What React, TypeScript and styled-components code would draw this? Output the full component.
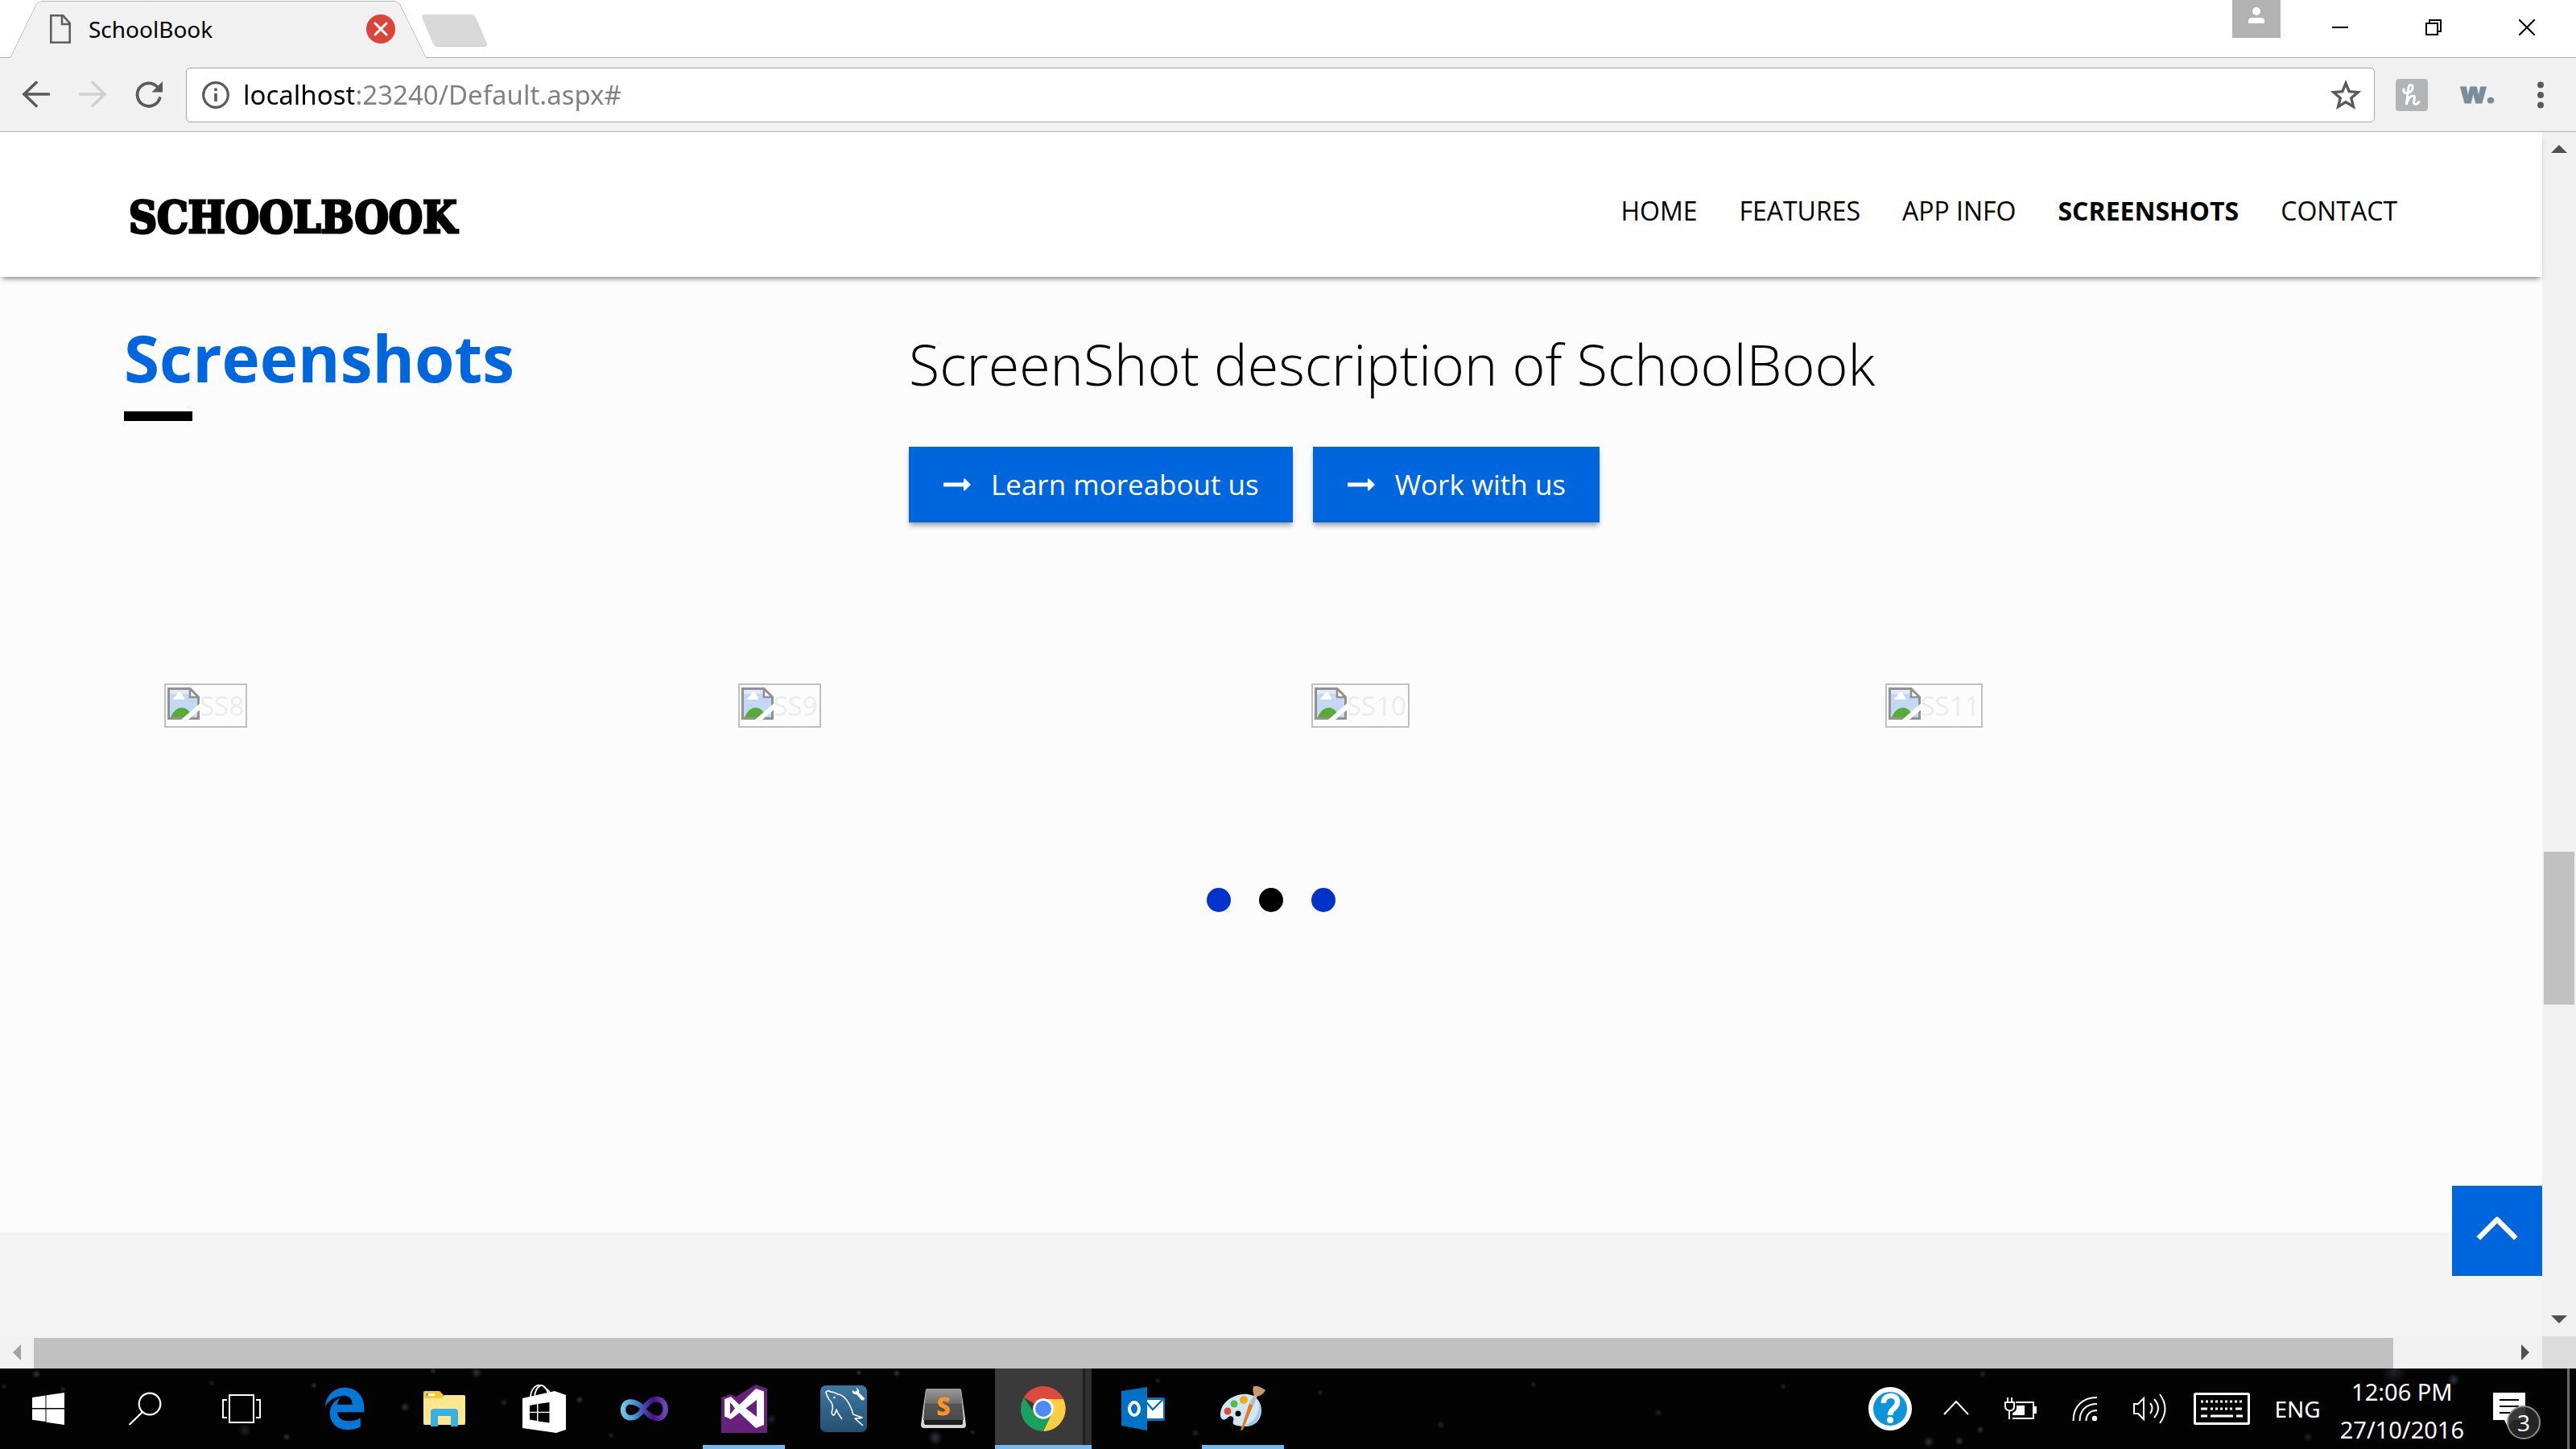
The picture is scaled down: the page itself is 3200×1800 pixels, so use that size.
import React from "react";
import styled, { createGlobalStyle, css } from "styled-components";
import { FaEdgeLegacy } from "react-icons/fa6";

const BLUE = "#0066de";
const UI_FONT = '"Noto Sans", "Open Sans", sans-serif';
const PAGE_FONT = '"Open Sans", "Noto Sans", sans-serif';

const GlobalStyle = createGlobalStyle`
  *, *::before, *::after { box-sizing: border-box; }
  html, body { margin: 0; padding: 0; }
  body { font-family: ${PAGE_FONT}; color: #000; background: #fff; }
  button { font: inherit; color: inherit; background: none; border: 0; padding: 0; margin: 0; cursor: pointer; }
  a { color: inherit; text-decoration: none; }
  svg { display: block; flex: none; }
  h1, h2, p, ul { margin: 0; padding: 0; }
  ul { list-style: none; }
`;

const Desktop = styled.div`
  min-height: 100vh;
  display: flex;
  flex-direction: column;
`;

/* ---------- browser frame ---------- */

const TabStrip = styled.div`
  display: flex;
  height: 72px;
  padding: 0 3px 0 12px;
  background: #fff;
  border-bottom: 1px solid #b0b0b0;
`;

const Tab = styled.div`
  position: relative;
  display: flex;
  align-items: center;
  width: 518px;
  height: 72px;
  padding: 0 39px 0 50px;
  &::before,
  &::after {
    content: "";
    position: absolute;
    top: 1px;
    bottom: 0;
    width: 60%;
    background: #f1f1f1;
    border-top: 1px solid #b0b0b0;
  }
  &::before {
    left: 0;
    border-left: 1px solid #b0b0b0;
    border-top-left-radius: 6px;
    transform: skewX(-26deg);
    transform-origin: bottom left;
  }
  &::after {
    right: 0;
    border-right: 1px solid #b0b0b0;
    border-top-right-radius: 6px;
    transform: skewX(26deg);
    transform-origin: bottom right;
  }
  > * {
    position: relative;
    z-index: 1;
  }
`;

const TabTitle = styled.span`
  flex: 1;
  margin-left: 22px;
  font: 28px/40px ${UI_FONT};
`;

const TabClose = styled.button`
  display: grid;
  place-items: center;
  width: 36px;
  height: 36px;
  border-radius: 50%;
  background: #db4437;
`;

const NewTab = styled.button`
  width: 67px;
  height: 40px;
  margin: 18px 0 0 1px;
  border-radius: 5px;
  background: #d9d9d9;
  border-bottom: 1px solid #c8c8c8;
  transform: skewX(23deg);
`;

const WindowControls = styled.div`
  display: flex;
  margin-left: auto;
`;

const UserBadge = styled.button`
  display: flex;
  justify-content: center;
  width: 60px;
  height: 47px;
  padding-top: 9px;
  margin-right: 16px;
  background: #b2b2b2;
`;

const WindowButton = styled.button`
  display: grid;
  place-items: center;
  width: 116px;
  height: 68px;
`;

const Toolbar = styled.div`
  display: flex;
  align-items: center;
  height: 92px;
  padding: 0 24px 0 25px;
  background: #f1f1f1;
  border-bottom: 1px solid #b0b0b0;
`;

const NavButtons = styled.div`
  display: flex;
  gap: 30px;
  margin-right: 26px;
`;

const IconButton = styled.button`
  display: grid;
  place-items: center;
  width: 40px;
  height: 40px;
`;

const Omnibox = styled.label`
  flex: 1;
  display: flex;
  align-items: center;
  height: 68px;
  padding: 0 16px 0 19px;
  background: #fff;
  border: 1px solid #a6a6a6;
  border-radius: 5px;
`;

const UrlInput = styled.input`
  flex: 1;
  min-width: 0;
  margin-left: 15px;
  padding: 0;
  border: 0;
  outline: 0;
  font: 33px/48px ${UI_FONT};
  color: transparent;
  background: linear-gradient(90deg, #000 138px, #808080 138px);
  -webkit-background-clip: text;
  background-clip: text;
`;

const Extensions = styled.div`
  display: flex;
  align-items: center;
  gap: 40px;
  margin-left: 26px;
`;

const HoneyBadge = styled.button`
  display: grid;
  place-items: center;
  width: 40px;
  height: 40px;
  border-radius: 4px;
  background: #b3b4b6;
`;

const WLabel = styled.button`
  width: 40px;
  padding-bottom: 6px;
  font: 800 36px/40px ${PAGE_FONT};
  color: #788d98;
  -webkit-text-stroke: 1px #788d98;
`;

/* ---------- page viewport with scroll bars ---------- */

const Viewport = styled.div`
  flex: 1;
  display: grid;
  grid-template-columns: minmax(0, 1fr) 42px;
  grid-template-rows: minmax(0, 1fr) 40px;
`;

const ScrollColumn = styled.div`
  display: flex;
  flex-direction: column;
  align-items: center;
  background: #f1f1f1;
`;

const ScrollRow = styled.div`
  display: flex;
  align-items: center;
  background: #f1f1f1;
`;

const ScrollArrow = styled.button`
  display: grid;
  place-items: center;
  width: 42px;
  height: 42px;
`;

const Space = styled.div<{ $grow: number }>`
  flex: ${(p) => p.$grow} 1 0;
`;

const VerticalThumb = styled.div`
  flex: 190 1 0;
  width: 38px;
  background: #c1c1c1;
`;

const HorizontalThumb = styled.div`
  flex: 2931 1 0;
  align-self: flex-end;
  height: 38px;
  background: #c1c1c1;
`;

const Corner = styled.div`
  background: #dcdcdc;
`;

/* ---------- the site ---------- */

const Page = styled.div`
  position: relative;
  display: flex;
  flex-direction: column;
  background: #f4f4f4;
`;

const container = css`
  width: 100%;
  max-width: 2850px;
  margin: 0 auto;
`;

const SiteHeader = styled.header`
  position: relative;
  z-index: 1;
  background: #fff;
  box-shadow: 0 5px 6px -3px rgba(0, 0, 0, 0.5);
`;

const HeaderInner = styled.div`
  ${container}
  display: flex;
  align-items: center;
  justify-content: space-between;
  height: 180px;
  padding-top: 15px;
`;

const Logo = styled.a`
  padding: 16px 0 0 6px;
  font: 700 54px/70px "DejaVu Serif Condensed", "DejaVu Serif", serif;
  font-stretch: condensed;
  -webkit-text-stroke: 3px #000;
`;

const SiteNav = styled.nav`
  display: flex;
`;

const NavLink = styled.a<{ $active?: boolean }>`
  padding: 0 26px;
  font-size: 32px;
  line-height: 50px;
  font-weight: ${(p) => (p.$active ? 700 : 400)};
`;

const Section = styled.main`
  padding: 56px 0 398px;
  background: #fcfcfc;
`;

const Intro = styled.div`
  ${container}
  display: grid;
  grid-template-columns: 13fr 25fr;
`;

const Heading = styled.h1`
  font-size: 80px;
  line-height: 88px;
  font-weight: 700;
  color: ${BLUE};
  &::after {
    content: "";
    display: block;
    width: 85px;
    height: 12px;
    margin-top: 23px;
    background: #000;
  }
`;

const Lead = styled.p`
  font-size: 70px;
  line-height: 104px;
  font-weight: 300;
`;

const Actions = styled.div`
  display: flex;
  gap: 25px;
  margin-top: 51px;
`;

const ActionButton = styled.button`
  display: flex;
  align-items: center;
  gap: 24px;
  height: 94px;
  padding: 0 42px;
  font-size: 35px;
  line-height: 50px;
  color: #fff;
  background: ${BLUE};
  box-shadow: 0 5px 6px -1px rgba(0, 0, 0, 0.35);
`;

const Carousel = styled.ul`
  ${container}
  display: grid;
  grid-template-columns: repeat(4, 1fr);
  margin-top: 200px;
`;

const Slide = styled.li`
  display: flex;
  padding-left: 50px;
`;

const MissingImage = styled.span`
  display: flex;
  height: 55px;
  padding: 3px 2px;
  border: 2px solid #c0c0c0;
  font-size: 33px;
  line-height: 46px;
  color: #ececec;
`;

const Pager = styled.div`
  display: flex;
  justify-content: center;
  gap: 35px;
  margin-top: 199px;
`;

const PagerDot = styled.button<{ $current?: boolean }>`
  width: 30px;
  height: 30px;
  border-radius: 50%;
  background: ${(p) => (p.$current ? "#000" : "#0033cc")};
`;

const BackToTop = styled.a`
  position: absolute;
  right: 0;
  bottom: 75px;
  display: grid;
  place-items: center;
  width: 112px;
  height: 112px;
  padding-bottom: 6px;
  background: ${BLUE};
`;

/* ---------- task bar ---------- */

const star = (x: number, y: number, size: number, alpha: number) =>
  `radial-gradient(circle at ${x}px ${y}px, rgba(150,175,190,${alpha}) 0, transparent ${size}px)`;

const STARS = [
  star(45, 7, 6, 0.3), star(5, 22, 4, 0.2), star(78, 26, 4, 0.2), star(263, 18, 4, 0.2),
  star(304, 77, 8, 0.2), star(356, 85, 5, 0.3), star(390, 21, 4, 0.3), star(503, 48, 6, 0.3),
  star(538, 3, 4, 0.3), star(592, 5, 7, 0.3), star(626, 42, 5, 0.2), star(720, 39, 5, 0.3),
  star(759, 83, 4, 0.2), star(958, 63, 7, 0.2), star(1067, 5, 4, 0.3), star(1114, 6, 5, 0.3),
  star(1162, 86, 9, 0.3), star(1208, 79, 4, 0.2), star(1438, 15, 4, 0.2), star(1485, 80, 5, 0.2),
  star(1640, 30, 4, 0.2), star(1790, 70, 5, 0.2), star(1905, 20, 4, 0.2), star(2060, 55, 5, 0.2),
  star(2215, 22, 4, 0.2), star(2396, 91, 7, 0.3), star(2434, 90, 6, 0.3), star(2460, 76, 5, 0.3),
  star(2463, 7, 5, 0.2), star(2867, 85, 6, 0.2), star(3048, 14, 8, 0.3), star(2974, 3, 16, 0.2),
].join(",");

const Taskbar = styled.footer`
  display: flex;
  height: 100px;
  background: ${STARS}, #030304;
  color: #fff;
  font-family: ${UI_FONT};
`;

const SystemButtons = styled.div`
  display: flex;
  margin-right: 6px;
`;

const SystemButton = styled.button`
  display: grid;
  place-items: center;
  width: 120px;
`;

const Apps = styled.div`
  display: flex;
`;

const AppButton = styled.button<{ $open?: boolean; $active?: boolean }>`
  display: grid;
  place-items: center;
  width: ${(p) => (p.$active ? 120 : 102)}px;
  margin: 0 ${(p) => (p.$active ? 2 : 11)}px;
  border-bottom: 5px solid transparent;
  padding-top: 5px;
  ${(p) => p.$open && css`border-bottom-color: #76b9ed;`}
  ${(p) =>
    p.$active &&
    css`
      background: linear-gradient(90deg, #3a3a3b 109px, #1f1f20 109px, #1f1f20 112px, #303031 112px);
    `}
`;

const Tray = styled.div`
  display: flex;
  align-items: center;
  margin-left: auto;
`;

const TrayItems = styled.div`
  display: flex;
  align-items: center;
  gap: 30px;
`;

const TrayButton = styled.button`
  display: grid;
  place-items: center;
  min-width: 50px;
  font-size: 28px;
  line-height: 46px;
`;

const Clock = styled.div`
  margin: 0 36px 0 24px;
  padding-top: 3px;
  text-align: center;
  font-size: 29px;
  line-height: 47px;
`;

const ActionCenter = styled.button`
  position: relative;
  margin-right: 50px;
`;

const Count = styled.span`
  position: absolute;
  left: 17px;
  top: 18px;
  width: 42px;
  height: 42px;
  border: 2px solid #8c8c8c;
  border-radius: 50%;
  background: rgba(40, 40, 40, 0.92);
  font-size: 28px;
  line-height: 38px;
  text-align: center;
`;

const ShowDesktop = styled.button`
  width: 11px;
  align-self: stretch;
  border-left: 3px solid #6b6b6b;
`;

/* ---------- drawings ---------- */

const Triangle = ({ turn, color = "#505050" }: { turn: number; color?: string }) => (
  <svg width="20" height="20" viewBox="0 0 20 20">
    <path d="M0 15 10 5l10 10z" fill={color} transform={`rotate(${turn} 10 10)`} />
  </svg>
);

const FileIcon = () => (
  <svg width="26" height="36" viewBox="0 0 26 36" fill="none" stroke="#5f5f5f" strokeWidth="2.6">
    <path d="M1.3 1.3h15L24.7 11v23.7H1.3z" />
    <path d="M15 1.3V12h9.7" />
  </svg>
);

const ArrowLeft = ({ flip, color }: { flip?: boolean; color: string }) => (
  <svg width="36" height="36" viewBox="0 0 36 36" fill="none" stroke={color} strokeWidth="3.6" strokeLinecap="round" strokeLinejoin="round">
    <path d={flip ? "M2.5 17h31M18 2.5 33 17 18 31.5" : "M33.5 17h-31M18 2.5 3 17l15 14.5"} />
  </svg>
);

const ReloadIcon = () => (
  <svg width="36" height="36" viewBox="0 0 36 36">
    <path d="M28 7.500A14.300 14.300 0 1 0 31.500 22" fill="none" stroke="#5a5a5a" strokeWidth="3.800" strokeLinecap="round" />
    <path d="M35 1V14.500H21.500z" fill="#5a5a5a" />
  </svg>
);

const InfoIcon = () => (
  <svg width="36" height="36" viewBox="0 0 36 36">
    <circle cx="17" cy="18" r="15.300" fill="none" stroke="#5a5a5a" strokeWidth="3.200" />
    <path d="M15.200 16h3.600v10h-3.600zM15.200 9.500h3.600v3.600h-3.600z" fill="#5a5a5a" />
  </svg>
);

const StarIcon = () => (
  <svg width="38" height="38" viewBox="0 0 38 38">
    <path d="M19 4.500l4.200 10.200 11 .9-8.400 7.200 2.600 10.700L19 27.800l-9.400 5.700 2.600-10.700-8.400-7.200 11-.9z" fill="none" stroke="#5a5a5a" strokeWidth="3.400" />
  </svg>
);

const UserIcon = () => (
  <svg width="20" height="20" viewBox="0 0 20 20" fill="#fff">
    <circle cx="10" cy="5" r="5" />
    <path d="M0 20v-3q0-4 5-4h10q5 0 5 4v3z" />
  </svg>
);

const HoneyIcon = () => (
  <svg width="26" height="28" viewBox="0 0 26 28" fill="none" stroke="#fff" strokeWidth="3" strokeLinecap="round" strokeLinejoin="round">
    <path d="M3 7c-1 4 2 5 6 4 5-1 7-9 3-9.500C9 1 8.500 6 8 12L6.500 25c2-6 5-10 8-10 4 0 .5 6 1 9 1 2.500 5 1.500 6.500-1.500" />
  </svg>
);

const DotsIcon = () => (
  <svg width="8" height="36" viewBox="0 0 8 36" fill="#5a5a5a">
    <circle cx="4" cy="5.500" r="4" />
    <circle cx="4" cy="18" r="4" />
    <circle cx="4" cy="30.500" r="4" />
  </svg>
);

const LongArrow = () => (
  <svg width="36" height="16" viewBox="0 0 36 16" fill="#fff">
    <path d="M1 5.500h25V0.500h1.500L35 8l-7.500 7.500H26v-5H1z" />
  </svg>
);

const BrokenImageIcon = () => (
  <svg width="40" height="40" viewBox="0 0 40 40">
    <path d="M1.500 1.500H28L38.500 12v26.500h-37z" fill="#c4d7f5" stroke="#919191" strokeWidth="3" />
    <path d="M3 3h24v5H3z" fill="#dfe9fb" />
    <path d="M7 15q1-4 4-4 1-5 4-5t4 5q3 0 2 4z" fill="#fff" />
    <path d="M4 37q5-12 14-12 8 0 13 12z" fill="#56ac35" />
    <path d="M28 1.500V12h10.500z" fill="#fff" stroke="#919191" strokeWidth="2.600" />
    <path d="M17 40 40 20v8L26 40z" fill="#fcfcfc" />
  </svg>
);

const ChevronUp = () => (
  <svg width="52" height="32" viewBox="0 0 52 32" fill="none" stroke="#fff" strokeWidth="6.500" strokeLinecap="square" strokeLinejoin="round">
    <path d="M5 26 26 5l21 21" />
  </svg>
);

const WindowsIcon = () => (
  <svg width="42" height="42" viewBox="0 0 42 42" fill="#fff">
    <path d="M1 7l16.500-2.500V20H1zM18.500 4.300 41 1v19H18.500zM1 21.500h16.500V37L1 34.700zM18.500 21.500H41V41l-22.500-3.300z" />
  </svg>
);

const SearchIcon = () => (
  <svg width="42" height="42" viewBox="0 0 42 42" fill="none" stroke="#fff" strokeWidth="2.200">
    <circle cx="27" cy="15" r="13.300" />
    <path d="M18 25 1.500 41" />
  </svg>
);

const TaskViewIcon = () => (
  <svg width="48" height="38" viewBox="0 0 48 38" fill="none" stroke="#fff" strokeWidth="2">
    <path d="M9 2h30v34H9zM6 8H1v22h5M42 8h5v22h-5" />
  </svg>
);

const FolderIcon = () => (
  <svg width="54" height="48" viewBox="0 0 54 48">
    <path d="M1 4q0-2 2-2h17q2 0 3 2l3 3v9H1z" fill="#fac832" />
    <path d="M1 11h23l3-4h24q2 0 2 2v33q0 2-2 2H3q-2 0-2-2z" fill="#ffe68f" />
    <path d="M4 5h11v3H4z" fill="#fff" />
    <path d="M4 5h3v3H4z" fill="#38b0e3" />
    <path d="M10 46V28q0-4 4-4h26q4 0 4 4v18h-9V33H19v13z" fill="#38b0e3" />
  </svg>
);

const StoreIcon = () => (
  <svg width="56" height="60" viewBox="0 0 56 60">
    <path d="M11 17C11-2 29-6 33 12M16 16C17 0 27-2 30 5q4 2 7 8" fill="none" stroke="#fff" strokeWidth="1.800" />
    <path d="M1 17 41 8l14 5v43l-12 4L1 54z" fill="#fff" />
    <path d="M10 26l9-1.700v9.500h-9zM20.500 24l14-2v11.800h-14zM10 35h9v10l-9-1.500zM20.500 35h14v12.500l-14-2z" fill="#000" />
  </svg>
);

const VsOnlineIcon = () => (
  <svg width="60" height="32" viewBox="0 0 60 32" fill="none" strokeWidth="6.500">
    <defs>
      <linearGradient id="loopBlue" x1="0" x2="1">
        <stop offset="0" stopColor="#6fc6e6" />
        <stop offset="0.500" stopColor="#4a9ad0" />
        <stop offset="1" stopColor="#3554a5" />
      </linearGradient>
      <linearGradient id="loopViolet" x1="0" x2="1">
        <stop offset="0" stopColor="#4a5cc0" />
        <stop offset="0.500" stopColor="#45108a" />
        <stop offset="1" stopColor="#6b4ab8" />
      </linearGradient>
    </defs>
    <path d="M29 15C23 9 18 7 12 7.500c-10 1-11 17-1 19.500 8 2 14-5 19-10" stroke="url(#loopBlue)" />
    <path d="M26 20C34 9 39 4 46 4c14 1 14 23 1 24-7 0-13-6-19-12" stroke="url(#loopViolet)" />
  </svg>
);

const VisualStudioIcon = () => (
  <svg width="57" height="60" viewBox="0 0 57 60">
    <path d="M0 16l12-4 6 3L43 0l14 5v55H0z" fill="#68217a" />
    <path
      fill="#fff"
      fillRule="evenodd"
      d="M4 18l8-3 10.500 10L43 5l10 3.500V50l-10 4-20.500-19L12 43l-8-3.500zM11 22v15l6-7.500zM44 19 30.500 29.500 44 40z"
    />
  </svg>
);

const MySqlIcon = () => (
  <svg width="58" height="58" viewBox="0 0 58 58">
    <defs>
      <linearGradient id="sqlTile" x1="0" y1="0" x2="0" y2="1">
        <stop offset="0" stopColor="#3d78a5" />
        <stop offset="1" stopColor="#24506f" />
      </linearGradient>
    </defs>
    <rect width="58" height="58" rx="7" fill="url(#sqlTile)" />
    <path d="M27 42c-2-3-5-6-7-12-1 2-1 7-4 7-2-1-2-4-1-7 1-4 0-7-2-10-3-3-5-8-6-11 0-2 3-3 6-1 5 0 6 2 9 3 8 1 13 9 17 19 1 2 1 5 2 6l11 4c-3 1-6 1-9 1 3 3 5 4 10 9" fill="none" stroke="#fff" strokeWidth="1.600" strokeLinejoin="round" />
    <circle cx="17.500" cy="15" r="1.300" fill="#fff" />
    <path d="M44 3c4 1 5 4 4 6l7 7c0 2-2 3-4 2l-6-7c-3 1-6-2-5-5l3 2 3-2z" fill="#fff" />
  </svg>
);

const SublimeLetter = styled.text`
  font: 700 30px ${UI_FONT};
  fill: #ff9421;
  stroke: #ff9421;
`;

const SublimeIcon = () => (
  <svg width="56" height="50" viewBox="0 0 56 50">
    <defs>
      <linearGradient id="keyTop" x1="0" y1="0" x2="0" y2="1">
        <stop offset="0" stopColor="#9a9a9a" />
        <stop offset="0.450" stopColor="#707070" />
        <stop offset="0.500" stopColor="#555" />
        <stop offset="1" stopColor="#4a4a4a" />
      </linearGradient>
    </defs>
    <path d="M6 1h44l6 44q0 4-4 4H4q-4 0-4-4z" fill="#d8d8d8" />
    <path d="M4 35h48v8q0 2-2 2H6q-2 0-2-2z" fill="#1e1e1e" />
    <path d="M8 0h40q2 0 2 3l3 36H3L6 3q0-3 2-3z" fill="url(#keyTop)" />
    <SublimeLetter x="28" y="33" textAnchor="middle">S</SublimeLetter>
  </svg>
);

const ChromeIcon = () => (
  <svg width="56" height="56" viewBox="0 0 56 56">
    <path d="M28 28 3.800 14A28 28 0 0 1 52.200 14L53 16H28z" fill="#dd4b3e" />
    <path d="M28 16h25A28 28 0 0 1 28 56L38.500 34z" fill="#ffcd42" />
    <path d="M3.800 14A28 28 0 0 0 28 56l10.500-22L28 40 17.600 34z" fill="#1aa15f" />
    <circle cx="28" cy="28" r="12.800" fill="#fff" />
    <circle cx="28" cy="28" r="10" fill="#4c8bf5" />
  </svg>
);

const OutlookIcon = () => (
  <svg width="54" height="54" viewBox="0 0 54 54">
    <path d="M30 13h22q2 0 2 2v25q0 2-2 2H30z" fill="#0072c6" />
    <path d="M32 16h20v23H32z" fill="#fff" />
    <path d="M31 19l8 9 13-13" fill="none" stroke="#0072c6" strokeWidth="2.400" />
    <path d="M0 5 32 0v54L0 48z" fill="#0072c6" />
    <ellipse cx="16" cy="27" rx="6" ry="8" fill="none" stroke="#fff" strokeWidth="4" />
  </svg>
);

const PaintIcon = () => (
  <svg width="56" height="56" viewBox="0 0 56 56">
    <path d="M27 10c15-2 24 8 24 20 0 13-10 21-23 20-8-1-14-1-12-7 2-5-3-8-7-4-5 5-9 2-9-4C0 22 12 12 27 10z" fill="#cfe6f5" />
    <path d="M48 20c7 16-4 31-20 30 14-5 21-15 20-30z" fill="#9cc9e6" />
    <circle cx="22" cy="34" r="3.500" fill="#050505" />
    <circle cx="9" cy="31" r="4.500" fill="#e0483c" />
    <circle cx="17" cy="22" r="4.500" fill="#57b947" />
    <circle cx="29" cy="17" r="5" fill="#f5a81c" />
    <path d="M25 55l11-34 5 2L28 54z" fill="#e07b24" />
    <path d="M36 22l6-12 4 2-5 12z" fill="#b8bcc2" />
    <path d="M41 0c6-1 11 2 15 5-3 5-7 8-12 7-4-1-4-8-3-12z" fill="#c99b6b" />
  </svg>
);

const HelpIcon = () => (
  <svg width="54" height="54" viewBox="0 0 54 54">
    <circle cx="27" cy="27" r="24" fill="#0c95da" stroke="#fff" strokeWidth="6" />
    <path d="M19 20c-1-12 18-12 17-1 0 8-9 7-9 16" fill="none" stroke="#fff" strokeWidth="6.500" />
    <circle cx="27" cy="41" r="4" fill="#fff" />
  </svg>
);

const CaretIcon = () => (
  <svg width="32" height="20" viewBox="0 0 32 20" fill="none" stroke="#fff" strokeWidth="2">
    <path d="M1 17 16 1l15 16" />
  </svg>
);

const BatteryIcon = () => (
  <svg width="42" height="30" viewBox="0 0 42 30" fill="none" stroke="#fff" strokeWidth="2">
    <path d="M15 7h22v20H11" />
    <path d="M38 12h3v9h-3z" fill="#fff" stroke="none" />
    <path d="M16 11h10v12H11v-3q4-1 5-5z" fill="#fff" stroke="none" />
    <path d="M5 1v6M10 1v6M2 7h11v5q0 5-5 5.500-6-.5-6-5.500zM7 17v11" />
  </svg>
);

const WifiIcon = () => (
  <svg width="32" height="32" viewBox="0 0 32 32" fill="none" stroke="#fff" strokeWidth="2">
    <path d="M1.500 31C1.500 13 13 2 31 2M9.500 31c0-13 8-21 21.500-21M17.500 31c0-8 5-13 13.500-13" />
    <circle cx="28" cy="28" r="3.200" fill="#fff" stroke="none" />
  </svg>
);

const VolumeIcon = () => (
  <svg width="42" height="38" viewBox="0 0 42 38" fill="none" stroke="#fff" strokeWidth="2">
    <path d="M2 13h5l7-7v26l-7-7H2zM22 12q5 6 0 13M27 7q10 11 0 23M34 1q13 18 0 36" />
  </svg>
);

const KeyboardIcon = () => (
  <svg width="70" height="40" viewBox="0 0 70 40" fill="none" stroke="#fff" strokeWidth="3">
    <rect x="1.500" y="1.500" width="67" height="37" rx="1" />
    <path d="M9 11h52" strokeDasharray="3 3" />
    <path d="M9 20h8m4 0h3m3 0h3m3 0h3m3 0h3m3 0h3m4 0h8M9 29h8m4 0h28m4 0h8" />
  </svg>
);

const NoteIcon = () => (
  <svg width="42" height="44" viewBox="0 0 42 44">
    <path d="M0 2h40v34H26l-8 8-4-8H0z" fill="#fff" />
    <path d="M8 11h24M8 19h24M8 27h14" stroke="#000" strokeWidth="2" />
  </svg>
);

/* ---------- content ---------- */

const links = [
  { label: "HOME" },
  { label: "FEATURES" },
  { label: "APP INFO" },
  { label: "SCREENSHOTS", active: true },
  { label: "CONTACT" },
];

const apps = [
  { name: "Microsoft Edge", icon: <FaEdgeLegacy size={54} color="#0078d7" /> },
  { name: "File Explorer", icon: <FolderIcon /> },
  { name: "Store", icon: <StoreIcon /> },
  { name: "Blend", icon: <VsOnlineIcon /> },
  { name: "Visual Studio", icon: <VisualStudioIcon />, open: true },
  { name: "MySQL Workbench", icon: <MySqlIcon /> },
  { name: "Sublime Text", icon: <SublimeIcon /> },
  { name: "Google Chrome", icon: <ChromeIcon />, open: true, active: true },
  { name: "Outlook", icon: <OutlookIcon /> },
  { name: "Paint", icon: <PaintIcon />, open: true },
];

export default function App() {
  return (
    <Desktop>
      <GlobalStyle />
      <TabStrip>
        <Tab>
          <FileIcon />
          <TabTitle>SchoolBook</TabTitle>
          <TabClose aria-label="Close tab">
            <svg width="18" height="18" viewBox="0 0 18 18" stroke="#fff" strokeWidth="3" strokeLinecap="round">
              <path d="M2 2l14 14M16 2 2 16" />
            </svg>
          </TabClose>
        </Tab>
        <NewTab aria-label="New tab" />
        <WindowControls>
          <UserBadge aria-label="User"><UserIcon /></UserBadge>
          <WindowButton aria-label="Minimise">
            <svg width="20" height="20" viewBox="0 0 20 20" stroke="#000" strokeWidth="2"><path d="M0 10h20" /></svg>
          </WindowButton>
          <WindowButton aria-label="Restore">
            <svg width="20" height="20" viewBox="0 0 20 20" fill="none" stroke="#000" strokeWidth="2">
              <path d="M1 5h14v14H1zM5 5V1h14v14h-4" />
            </svg>
          </WindowButton>
          <WindowButton aria-label="Close">
            <svg width="20" height="20" viewBox="0 0 20 20" stroke="#000" strokeWidth="2"><path d="M0 0l20 20M20 0 0 20" /></svg>
          </WindowButton>
        </WindowControls>
      </TabStrip>

      <Toolbar>
        <NavButtons>
          <IconButton aria-label="Back"><ArrowLeft color="#5a5a5a" /></IconButton>
          <IconButton aria-label="Forward"><ArrowLeft flip color="#d0d0d0" /></IconButton>
          <IconButton aria-label="Reload"><ReloadIcon /></IconButton>
        </NavButtons>
        <Omnibox>
          <InfoIcon />
          <UrlInput aria-label="Address" defaultValue="localhost:23240/Default.aspx#" />
          <StarIcon />
        </Omnibox>
        <Extensions>
          <HoneyBadge aria-label="Honey"><HoneyIcon /></HoneyBadge>
          <WLabel>w.</WLabel>
          <IconButton aria-label="Menu"><DotsIcon /></IconButton>
        </Extensions>
      </Toolbar>

      <Viewport>
        <Page>
          <SiteHeader>
            <HeaderInner>
              <Logo href="#">SCHOOLBOOK</Logo>
              <SiteNav>
                {links.map((l) => (
                  <NavLink key={l.label} href="#" $active={l.active}>{l.label}</NavLink>
                ))}
              </SiteNav>
            </HeaderInner>
          </SiteHeader>
          <Section>
            <Intro>
              <Heading>Screenshots</Heading>
              <div>
                <Lead>ScreenShot description of SchoolBook</Lead>
                <Actions>
                  <ActionButton><LongArrow />Learn moreabout us</ActionButton>
                  <ActionButton><LongArrow />Work with us</ActionButton>
                </Actions>
              </div>
            </Intro>
            <Carousel>
              {["SS8", "SS9", "SS10", "SS11"].map((name) => (
                <Slide key={name}>
                  <MissingImage><BrokenImageIcon />{name}</MissingImage>
                </Slide>
              ))}
            </Carousel>
            <Pager>
              <PagerDot aria-label="Page 1" />
              <PagerDot aria-label="Page 2" $current />
              <PagerDot aria-label="Page 3" />
            </Pager>
          </Section>
          <BackToTop href="#" aria-label="Back to top"><ChevronUp /></BackToTop>
        </Page>
        <ScrollColumn>
          <ScrollArrow aria-label="Scroll up"><Triangle turn={0} /></ScrollArrow>
          <Space $grow={852} />
          <VerticalThumb />
          <Space $grow={370} />
          <ScrollArrow aria-label="Scroll down"><Triangle turn={180} /></ScrollArrow>
        </ScrollColumn>
        <ScrollRow>
          <ScrollArrow aria-label="Scroll left"><Triangle turn={-90} color="#a3a3a3" /></ScrollArrow>
          <HorizontalThumb />
          <Space $grow={143} />
          <ScrollArrow aria-label="Scroll right"><Triangle turn={90} /></ScrollArrow>
        </ScrollRow>
        <Corner />
      </Viewport>

      <Taskbar>
        <SystemButtons>
          <SystemButton aria-label="Start"><WindowsIcon /></SystemButton>
          <SystemButton aria-label="Search"><SearchIcon /></SystemButton>
          <SystemButton aria-label="Task view"><TaskViewIcon /></SystemButton>
        </SystemButtons>
        <Apps>
          {apps.map((a) => (
            <AppButton key={a.name} aria-label={a.name} $open={a.open} $active={a.active}>{a.icon}</AppButton>
          ))}
        </Apps>
        <Tray>
          <TrayItems>
            <TrayButton aria-label="Help"><HelpIcon /></TrayButton>
            <TrayButton aria-label="Hidden icons"><CaretIcon /></TrayButton>
            <TrayButton aria-label="Battery"><BatteryIcon /></TrayButton>
            <TrayButton aria-label="Network"><WifiIcon /></TrayButton>
            <TrayButton aria-label="Volume"><VolumeIcon /></TrayButton>
            <TrayButton aria-label="Keyboard"><KeyboardIcon /></TrayButton>
            <TrayButton>ENG</TrayButton>
          </TrayItems>
          <Clock>
            <div>12:06 PM</div>
            <div>27/10/2016</div>
          </Clock>
          <ActionCenter aria-label="Notifications"><NoteIcon /><Count>3</Count></ActionCenter>
          <ShowDesktop aria-label="Show desktop" />
        </Tray>
      </Taskbar>
    </Desktop>
  );
}
